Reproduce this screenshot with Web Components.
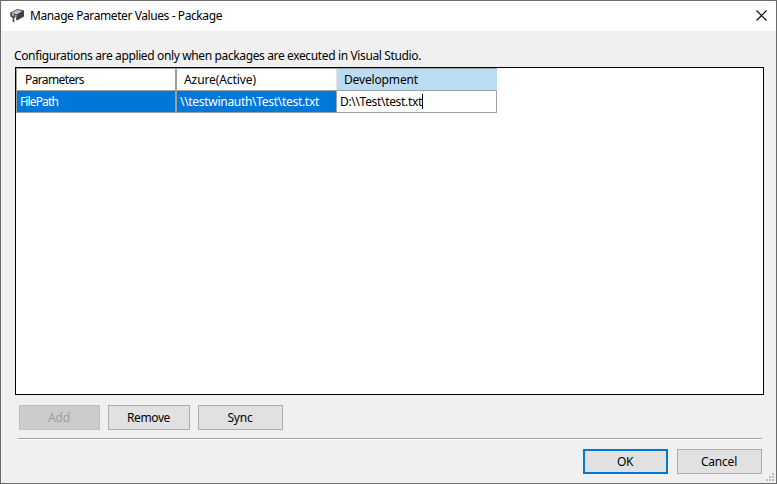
<!DOCTYPE html>
<html lang="en"><head><meta charset="utf-8"><title>Manage Parameter Values - Package</title>
<style>html,body{margin:0;height:100%;overflow:hidden}body{font:12px/16px "Noto Sans","Open Sans",sans-serif;color:#000}</style></head>
<body>
<param-dialog></param-dialog>
<script>
// Inline label whose tracking is adjusted so that it spans a given width.
class FitText extends HTMLElement{
  constructor(){super();this.attachShadow({mode:'open'}).innerHTML='<style>:host{display:inline-block;white-space:nowrap;line-height:16px;flex:none}span{display:inline-block}</style><span><slot></slot></span>';}
  connectedCallback(){
    const s=this.shadowRoot.querySelector('span'),w=+this.getAttribute('w'),n=this.textContent.length;
    const cur=s.getBoundingClientRect().width;
    if(w&&cur){s.style.letterSpacing=((w-cur)/n)+'px';}
  }
}
customElements.define('fit-text',FitText);

class PushButton extends HTMLElement{
  constructor(){super();this.attachShadow({mode:'open'}).innerHTML=`<style>
  :host{display:block;height:25px;box-sizing:border-box}
  button{all:unset;box-sizing:border-box;width:100%;height:100%;display:flex;align-items:center;justify-content:center;background:#e1e1e1;border:1px solid #adadad;padding-right:1px}
  :host([default]) button{border:2px solid #0078d7}
  :host([disabled]) button{background:#ccc;border-color:#bfbfbf;color:#a0a0a0}
  </style><button><slot></slot></button>`;}
}
customElements.define('push-button',PushButton);

class TitleBar extends HTMLElement{
  constructor(){super();this.attachShadow({mode:'open'}).innerHTML=`<style>
  :host{display:flex;height:30px;background:#fff;align-items:center;padding:0 10px 0 8px}
  .t{margin-left:5px;flex:1;display:flex}
  svg{display:block;flex:none}
  .x{margin:0 -1px 2px 0}
  </style><svg width="16" height="16" viewBox="0 0 16 16"><path d="M1.5 5 8 1.5l6.5 1.3L8 6.8z" fill="#c8c8c8" stroke="#555" stroke-width="1"/><path d="M7.5 6.8 15 2.6v6L8 12.6l-1-1z" fill="#404040"/><path d="M1.2 5 4 4.8 6.6 6v3L5.4 10.2V14H3.6v-4L1.2 8.3z" fill="#505050"/><path d="M4 5v3" stroke="#eee"/></svg>
  <div class="t"><slot></slot></div>
  <svg class="x" width="11" height="11" viewBox="0 0 11 11"><path d="M.5.5l10 10M10.5.5l-10 10" stroke="#000" stroke-width="1.1"/></svg>`;}
}
customElements.define('title-bar',TitleBar);

class ParamGrid extends HTMLElement{
  constructor(){super();this.attachShadow({mode:'open'}).innerHTML=`<style>
  :host{display:block;box-sizing:border-box;height:328px;border:1px solid #000;background:#fff}
  .g{display:grid;width:481px;box-sizing:border-box;grid-template-columns:160px 160px 160px;grid-template-rows:22px 22px;border-left:1px solid #a0a0a0;border-top:1px solid #a0a0a0}
  .g>div{box-sizing:border-box;border-right:1px solid #a0a0a0;border-bottom:1px solid #a0a0a0;display:flex;align-items:center;padding-left:7px}
  .g>.p{padding-left:8px}
  .g>.r{padding-left:3px}
  .g>.a{border-right-width:2px}
  .sel{background:#0078d7;color:#fff}
  .act{background:#bcdcf4}
  .g>.h2{border-right-color:#e5e5e5}.g>.act{border-right-color:#bcdcf4}
  .caret{width:1px;height:15px;background:#000}
  </style><div class="g">
  <div class="a p"><fit-text w="59">Parameters</fit-text></div><div class="h2"><fit-text w="72">Azure(Active)</fit-text></div><div class="act"><fit-text w="74">Development</fit-text></div>
  <div class="r sel a"><fit-text w="38">FilePath</fit-text></div><div class="r sel"><fit-text w="139">\\\\testwinauth\\Test\\test.txt</fit-text></div><div class="r"><fit-text w="82">D:\\\\Test\\test.txt</fit-text><i class="caret"></i></div>
  </div>`;}
}
customElements.define('param-grid',ParamGrid);

class SizeGrip extends HTMLElement{
  constructor(){super();this.attachShadow({mode:'open'}).innerHTML=`<style>:host{display:block}svg{display:block}</style><svg width="8" height="8" fill="#bfbfbf"><path d="M6 0h2v2H6zM3 3h2v2H3zM6 3h2v2H6zM0 6h2v2H0zM3 6h2v2H3zM6 6h2v2H6z"/></svg>`;}
}
customElements.define('size-grip',SizeGrip);

class ParamDialog extends HTMLElement{
  constructor(){super();this.attachShadow({mode:'open'}).innerHTML=`<style>
  :host{display:block;box-sizing:border-box;position:relative;width:777px;height:484px;border:1px solid #6b696b;background:#f0f0f0}
  .msg{padding:17px 0 0 13px;height:19px;display:flex}
  param-grid{margin:0 12px 0 14px}
  .b{display:flex;padding:10px 0 0 18px}
  .add{width:81px;margin-right:8px}.rem{width:82px;margin-right:8px}.sy{width:85px}
  .hr{margin:8px 14px 0 17px;border-top:1px solid #a0a0a0;height:1px;background:#fff}
  .f{display:flex;justify-content:flex-end;gap:9px;padding:9px 14px 0 0}
  .f push-button{width:85px}
  size-grip{position:absolute;right:2px;bottom:2px}
  </style>
  <title-bar><fit-text w="192">Manage Parameter Values - Package</fit-text></title-bar>
  <div class="msg"><fit-text w="407">Configurations are applied only when packages are executed in Visual Studio.</fit-text></div>
  <param-grid></param-grid>
  <div class="b"><push-button class="add" disabled><fit-text w="22">Add</fit-text></push-button><push-button class="rem"><fit-text w="43">Remove</fit-text></push-button><push-button class="sy"><fit-text w="25">Sync</fit-text></push-button></div>
  <div class="hr"></div>
  <div class="f"><push-button default><fit-text w="16">OK</fit-text></push-button><push-button><fit-text w="36">Cancel</fit-text></push-button></div>
  <size-grip></size-grip>`;}
}
customElements.define('param-dialog',ParamDialog);
</script></body></html>
